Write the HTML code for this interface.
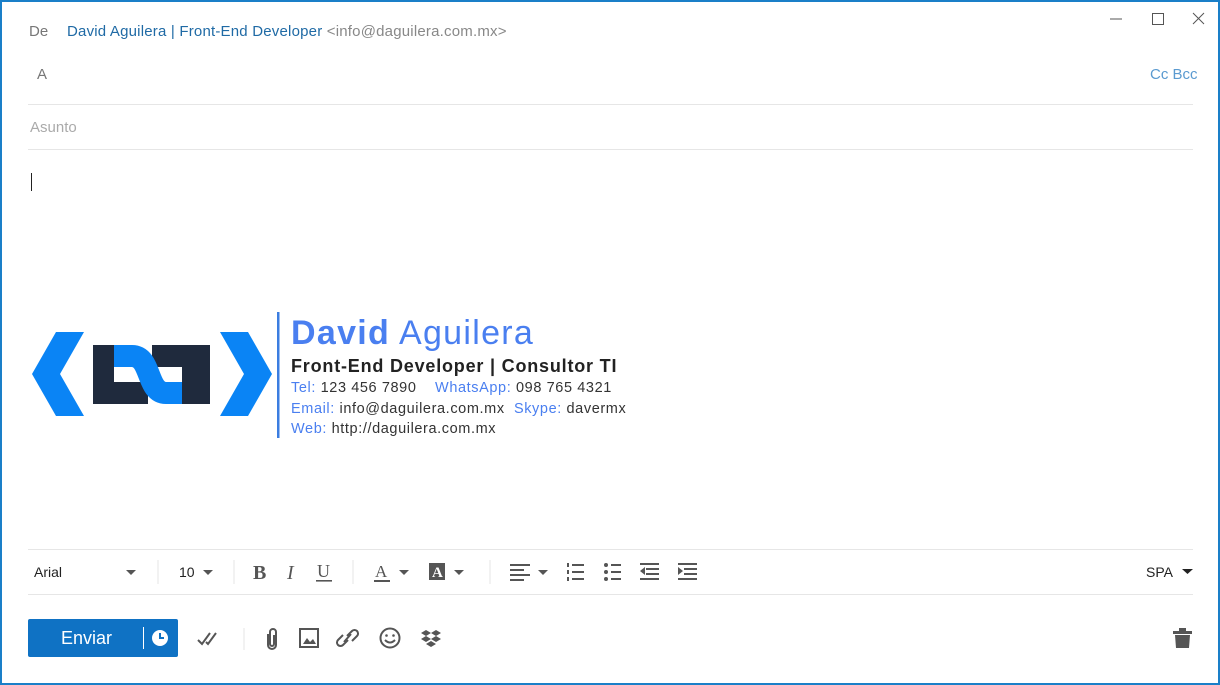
<!DOCTYPE html>
<html><head><meta charset="utf-8"><style>
*{margin:0;padding:0;box-sizing:border-box}
body{width:1220px;height:685px;background:#fff;font-family:"Liberation Sans",sans-serif;position:relative;overflow:hidden}
.frame{position:absolute;left:0;top:0;width:1220px;height:685px;border:2px solid #1a7fc8}
.t{position:absolute;white-space:nowrap}
.hr{position:absolute;left:28px;width:1165px;height:1px;background:#e6e6e6}
.ic{position:absolute}
.sig{color:#4a7ff0}
.dk{color:#333}
.sl{font-size:14.5px;letter-spacing:.6px}
</style></head><body>
<div class="frame"></div>
<div class="t" style="left:29px;top:23px;font-size:15px;color:#777">De</div>
<div class="t" style="left:67px;top:23px;font-size:15px;letter-spacing:.2px;color:#1f6aa5">David Aguilera | Front-End Developer <span style="color:#888">&lt;info@daguilera.com.mx&gt;</span></div>
<svg class="ic" style="left:1108px;top:10px" width="100" height="20"><line x1="2" y1="9" x2="14" y2="9" stroke="#555"/><rect x="44.5" y="3.5" width="11" height="11" fill="none" stroke="#555"/><path d="M85 3 L96 14 M96 3 L85 14" stroke="#555"/></svg>
<div class="t" style="left:37px;top:66px;font-size:15px;color:#777">A</div>
<div class="t" style="left:1150px;top:66px;font-size:15px;color:#5a9ad0">Cc Bcc</div>
<div class="hr" style="top:104px"></div>
<div class="t" style="left:30px;top:119px;font-size:15px;color:#aaa">Asunto</div>
<div class="hr" style="top:149px"></div>
<div style="position:absolute;left:31px;top:173px;width:1px;height:18px;background:#222"></div>

<svg class="ic" style="left:0;top:300px" width="280" height="140">
<polygon points="56,32 84,32 60,74 84,116 56,116 32,74" fill="#0a84f5"/>
<polygon points="220,32 248,32 272,74 248,116 220,116 244,74" fill="#0a84f5"/>
<g fill="#1f2a3d">
<rect x="93" y="45" width="21" height="59"/><rect x="93" y="82" width="55" height="22"/>
<rect x="152" y="45" width="58" height="22"/><rect x="182" y="45" width="28" height="59"/>
</g>
<path d="M114 56 H132 C152 56 146 93 166 93 H182" stroke="#0a84f5" stroke-width="22" fill="none"/>
<rect x="277" y="12" width="2.5" height="126" fill="#3b7de0"/>
</svg>
<div class="t sig" style="left:291px;top:314px;font-size:34px;letter-spacing:1.3px"><b>David</b> Aguilera</div>
<div class="t" style="left:291px;top:356px;font-size:18px;letter-spacing:.8px;font-weight:bold;color:#222">Front-End Developer | Consultor TI</div>
<div class="t sl" style="left:291px;top:380px"><span class="sig">Tel:</span> <span class="dk">123 456 7890</span>&nbsp;&nbsp;&nbsp; <span class="sig">WhatsApp:</span> <span class="dk">098 765 4321</span></div>
<div class="t sl" style="left:291px;top:401px"><span class="sig">Email:</span> <span class="dk">info@daguilera.com.mx</span>&nbsp; <span class="sig">Skype:</span> <span class="dk">davermx</span></div>
<div class="t sl" style="left:291px;top:421px"><span class="sig">Web:</span> <span class="dk">http://daguilera.com.mx</span></div>

<div class="hr" style="top:549px"></div>
<div class="t" style="left:34px;top:564px;font-size:14px;color:#222">Arial</div>
<div class="t" style="left:179px;top:564px;font-size:14px;color:#222">10</div>
<div class="t" style="left:1146px;top:564px;font-size:14px;color:#222">SPA</div>
<svg class="ic" style="left:0;top:555px" width="1220" height="35">
<g fill="#555">
<polygon points="126,15 136,15 131,20"/><polygon points="203,15 213,15 208,20"/><polygon points="399,15 409,15 404,20"/><polygon points="454,15 464,15 459,20"/><polygon points="538,15 548,15 543,20"/><polygon points="1182,14 1193,14 1187.5,19" fill="#222"/>
</g>
<g stroke="#e6e6e6"><line x1="158" y1="5" x2="158" y2="29"/><line x1="234" y1="5" x2="234" y2="29"/><line x1="353" y1="5" x2="353" y2="29"/><line x1="490" y1="5" x2="490" y2="29"/></g>
<text x="253" y="24" font-family="Liberation Serif" font-weight="bold" font-size="20" fill="#555">B</text>
<text x="287" y="24" font-family="Liberation Serif" font-style="italic" font-size="20" fill="#555">I</text>
<text x="317" y="22" font-family="Liberation Serif" font-size="18" fill="#555">U</text><rect x="316" y="25" width="16" height="1.6" fill="#555"/>
<text x="375" y="22" font-family="Liberation Serif" font-size="17" fill="#555">A</text><rect x="374" y="25" width="16" height="2" fill="#555"/>
<rect x="429" y="8" width="16" height="17" fill="#555"/><text x="432" y="22" font-family="Liberation Serif" font-weight="bold" font-size="15" fill="#fff">A</text>
<g fill="#555">
<rect x="510" y="9" width="20" height="2"/><rect x="510" y="14" width="14" height="2"/><rect x="510" y="19" width="20" height="2"/><rect x="510" y="24" width="14" height="2"/>
<rect x="572" y="9" width="12" height="2"/><rect x="572" y="16" width="12" height="2"/><rect x="572" y="23" width="12" height="2"/>
<rect x="567" y="8" width="2" height="4"/><rect x="567" y="15" width="2" height="4"/><rect x="567" y="22" width="2" height="4"/>
<circle cx="606" cy="10" r="2"/><circle cx="606" cy="17" r="2"/><circle cx="606" cy="24" r="2"/>
<rect x="611" y="9" width="10" height="2"/><rect x="611" y="16" width="10" height="2"/><rect x="611" y="23" width="10" height="2"/>
<rect x="640" y="8" width="19" height="2"/><rect x="646" y="13" width="13" height="2"/><rect x="646" y="18" width="13" height="2"/><rect x="640" y="23" width="19" height="2"/><polygon points="640,16 645,12 645,20"/>
<rect x="678" y="8" width="19" height="2"/><rect x="684" y="13" width="13" height="2"/><rect x="684" y="18" width="13" height="2"/><rect x="678" y="23" width="19" height="2"/><polygon points="683,16 678,12 678,20"/>
</g>
</svg>
<div class="hr" style="top:594px"></div>

<div style="position:absolute;left:28px;top:619px;width:150px;height:38px;background:#0f72c4;border-radius:2px"></div>
<div class="t" style="left:61px;top:628px;font-size:18px;color:#fff">Enviar</div>
<div style="position:absolute;left:143px;top:627px;width:1px;height:22px;background:#fff"></div>
<svg class="ic" style="left:150px;top:627px" width="22" height="22"><circle cx="10" cy="11" r="8" fill="#fff"/><path d="M10 6 V11 H14" stroke="#0f72c4" stroke-width="2" fill="none"/></svg>
<svg class="ic" style="left:195px;top:625px" width="260" height="28" fill="none" stroke="#555" stroke-width="2">
<path d="M3 15 L7 19 L15 8 M11 17 L13 19 L21 8"/>
<line x1="49" y1="3" x2="49" y2="25" stroke="#e6e6e6" stroke-width="1"/>
<path d="M73 9 V20 A4 4 0 0 0 81 20 V7 A3 3 0 0 0 75 7 V19 A1 1 0 0 0 79 19 V10"/>
<rect x="105" y="4" width="18" height="18" stroke-width="2"/><path d="M108 19 L112 13 L115 17 L118 14 L121 19 Z" fill="#555" stroke="none"/>
<path d="M153 15 L148 20 A3.5 3.5 0 0 1 143 15 L148 10 M152 11 L157 6 A3.5 3.5 0 0 1 162 11 L157 16 M149 17 L156 9"/>
<circle cx="195" cy="13" r="9.5"/><circle cx="191.5" cy="10.5" r="1.3" fill="#555" stroke="none"/><circle cx="198.5" cy="10.5" r="1.3" fill="#555" stroke="none"/><path d="M190 15 Q195 20 200 15"/>
<g fill="#555" stroke="none"><polygon points="231,5 236,8 231,11 226,8"/><polygon points="241,5 246,8 241,11 236,8"/><polygon points="231,11 236,14 231,17 226,14"/><polygon points="241,11 246,14 241,17 236,14"/><polygon points="236,16 241,19 236,22 231,19"/></g>
</svg>
<svg class="ic" style="left:1172px;top:627px" width="22" height="24" fill="#555"><rect x="1" y="4" width="19" height="3"/><rect x="7" y="1" width="7" height="3"/><path d="M3 8 H18 L17 21 H4 Z"/></svg>
</body></html>
